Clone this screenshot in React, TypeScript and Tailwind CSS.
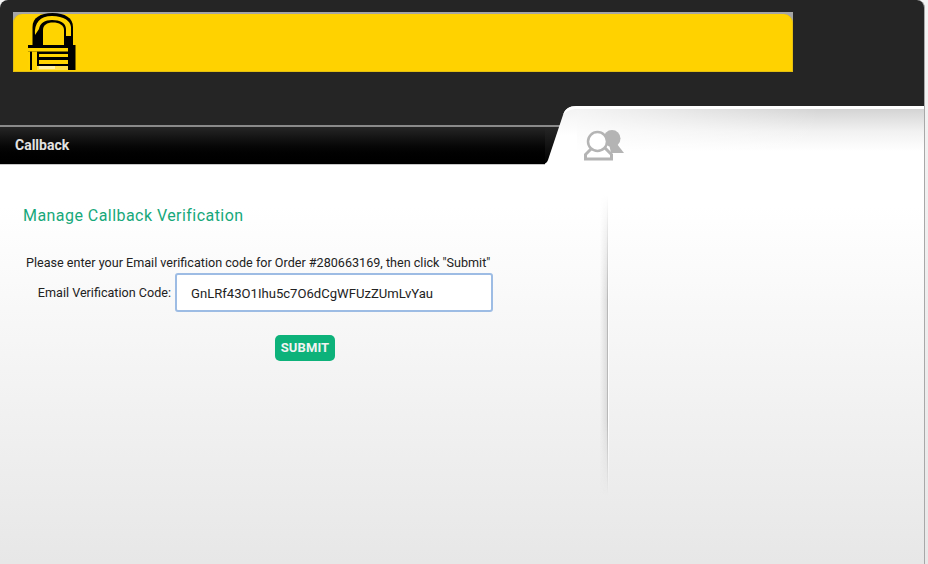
function LockLogo() {
  return (
    <svg width="48" height="58" viewBox="0 0 48 58">
      <path d="M4.5 33V14C4.5 5 12 0 24.5 0C37 0 45 5 45 14V33Z" fill="#000" />
      <path d="M7 22C6 10 12 3 24 3C36 3 42.5 8 43 14V23H38V16C38 10 32 7 24 7C17 7 12 10 11 16Z" fill="#ffd400" />
      <path d="M15 33V17C15 12 19 9.5 25 9.5C31 9.5 36 12 36 17V33Z" fill="#ffd400" />
      <rect x="0" y="32" width="47.5" height="25" fill="#000" />
      <rect x="0" y="35" width="40" height="3.5" fill="#ffd400" />
      <rect x="0" y="38.5" width="2" height="18.5" fill="#ffd400" />
      <rect x="4" y="38.5" width="5" height="18.5" fill="#ffd400" />
      <rect x="11" y="41" width="29" height="3" fill="#ffd400" />
      <rect x="11" y="47" width="29" height="4" fill="#ffd400" />
      <rect x="9" y="53" width="31" height="4" fill="#ffe04a" />
      <rect x="11" y="53" width="16" height="3" fill="#fff2a8" />
    </svg>
  );
}

function UsersIcon() {
  return (
    <svg width="42" height="34" viewBox="0 0 42 34">
      <circle cx="28" cy="9.5" r="8.5" fill="#b4b4b4" />
      <path d="M25 15H33L40 24H27Z" fill="#b4b4b4" />
      <path d="M8 19L1.5 25.5V30H27.5V25.5L21 19Z" fill="#fff" stroke="#b4b4b4" strokeWidth="3" />
      <circle cx="13.5" cy="12.5" r="9.5" fill="#fff" stroke="#b4b4b4" strokeWidth="2.5" />
    </svg>
  );
}

export default function App() {
  return (
    <div className="w-[928px] h-[564px] overflow-hidden bg-gradient-to-b from-[#f4f4f4] to-[#e8e8e8] font-['Roboto',sans-serif]">
      <div className="w-[925px] h-full flex flex-col overflow-hidden rounded-t-[8px] bg-[#252525] border-r border-[#a8a8a8]">
        <div className="h-[106px] shrink-0 pt-3 pl-[13px]">
          <div className="relative w-[780px] h-[60px] bg-[#a5a5a5] pt-[2px]">
            <div className="h-full bg-[#ffd200] rounded-t-[9px] border-x border-b border-[#e3bf10]" />
            <div className="absolute left-[15px] top-[1px]">
              <LockLogo />
            </div>
          </div>
        </div>

        <div className="flex h-[60px] shrink-0">
          <div className="w-[545px] shrink-0 flex flex-col bg-white">
            <div className="h-[19px] bg-[#252525] border-b-2 border-[#8a8a8a] shrink-0 box-content" />
            <div className="h-[37px] shrink-0 bg-gradient-to-b from-[#262626] to-[#000] flex items-center pl-[15px]">
              <span className="text-[14px] font-bold text-[#e2e2e2]">Callback</span>
            </div>
            <div className="h-px bg-[#c8c8c8]" />
          </div>
          <svg width="32" height="60" viewBox="0 0 32 60" className="shrink-0">
            <defs>
              <linearGradient id="tabFill" x1="0" y1="0" x2="0" y2="1">
                <stop offset="0" stopColor="#f2f2f2" />
                <stop offset="0.5" stopColor="#ffffff" />
              </linearGradient>
              <linearGradient id="barFill" x1="0" y1="0" x2="0" y2="1">
                <stop offset="0" stopColor="#262626" />
                <stop offset="1" stopColor="#000" />
              </linearGradient>
            </defs>
            <rect width="32" height="60" fill="#252525" />
            <rect y="19" width="32" height="2" fill="#8a8a8a" />
            <rect y="21" width="32" height="37" fill="url(#barFill)" />
            <path d="M0 60V58C-1 58 -2 58 -2 58C0 58 2 57 3 54L18 9C20 3 24 0 32 0V60Z" fill="url(#tabFill)" />
            <path d="M18 9C20 3 24 0 32 0V3C27 3 21 5 18 9Z" fill="#fff" />
          </svg>
          <div className="relative flex-1 border-t-[3px] border-white bg-[linear-gradient(to_right,rgba(255,255,255,0.75),transparent_70%),linear-gradient(to_bottom,#d4d4d4,#f2f2f2_40%,#fff_75%)]">
            <div className="absolute left-[7px] top-[20px]">
              <UsersIcon />
            </div>
          </div>
        </div>

        <div className="flex-1 flex bg-gradient-to-b from-white from-10% to-[#e7e7e7]">
          <div className="w-[600px] shrink-0 pl-[23px]">
            <h1 className="mt-[40px] text-[16px] leading-[19px] tracking-[0.45px] text-[#16a87a] font-normal">
              Manage Callback Verification
            </h1>
            <p className="mt-[31px] ml-[3px] text-[12.6px] leading-[14px] text-[#222] whitespace-nowrap">
              Please enter your Email verification code for Order #280663169, then click "Submit"
            </p>
            <div className="flex items-center mt-[3px]">
              <label className="w-[148px] pt-px text-right text-[12.6px] text-[#222] whitespace-nowrap">Email Verification Code:</label>
              <input
                readOnly
                value="GnLRf43O1Ihu5c7O6dCgWFUzZUmLvYau"
                className="ml-[4px] w-[318px] h-[39px] pl-[14px] pt-px bg-white rounded-[3px] border-2 border-[#9dbce4] text-[13.1px] text-[#222] outline-none font-['Roboto',sans-serif]"
              />
            </div>
            <button className="block ml-[252px] mt-[23px] w-[60px] h-[26px] rounded-[5px] bg-[#0db27a] text-[#f2f2f2] text-[13px] font-bold tracking-[0.1px]">
              SUBMIT
            </button>
          </div>
          <div className="flex w-[9px] h-[300px] mt-[29px] shrink-0 [mask-image:linear-gradient(to_bottom,transparent,black_35%,black_75%,transparent)]">
            <div className="w-[7px] bg-gradient-to-r from-transparent to-[#dcdcdc]" />
            <div className="w-px bg-[#b8b8b8]" />
            <div className="w-px bg-white" />
          </div>
        </div>
      </div>
    </div>
  );
}
